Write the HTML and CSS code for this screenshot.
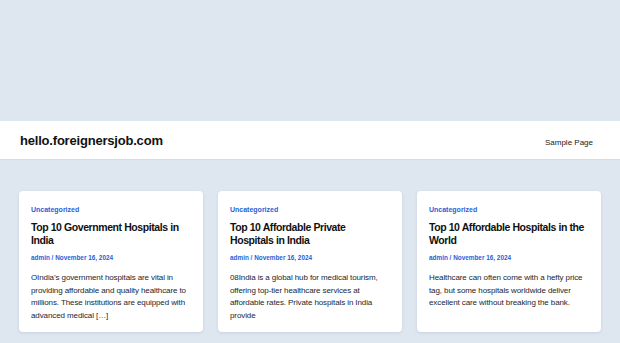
FILE: index.html
```html
<!DOCTYPE html>
<html>
<head>
<meta charset="utf-8">
<link rel="stylesheet" href="styles.css">
</head>
<body>
<div class="top-space"></div>
<header class="site-header">
  <a class="site-title" href="#">hello.foreignersjob.com</a>
  <nav class="site-nav"><a href="#">Sample Page</a></nav>
</header>
<main class="posts">
  <article class="card">
    <a class="cat" href="#">Uncategorized</a>
    <h2 class="title">Top 10 Government Hospitals in India</h2>
    <div class="meta">admin / November 16, 2024</div>
    <p class="excerpt">OIndia’s government hospitals are vital in providing affordable and quality healthcare to millions. These institutions are equipped with advanced medical […]</p>
  </article>
  <article class="card">
    <a class="cat" href="#">Uncategorized</a>
    <h2 class="title">Top 10 Affordable Private Hospitals in India</h2>
    <div class="meta">admin / November 16, 2024</div>
    <p class="excerpt">08India is a global hub for medical tourism, offering top-tier healthcare services at affordable rates. Private hospitals in India provide</p>
  </article>
  <article class="card">
    <a class="cat" href="#">Uncategorized</a>
    <h2 class="title">Top 10 Affordable Hospitals in the World</h2>
    <div class="meta">admin / November 16, 2024</div>
    <p class="excerpt">Healthcare can often come with a hefty price tag, but some hospitals worldwide deliver excellent care without breaking the bank.</p>
  </article>
</main>
</body>
</html>
```

FILE: styles.css
```css
html, body {
  margin: 0;
  padding: 0;
}
body {
  background: #dee6f0;
  font-family: "Liberation Sans", Arial, sans-serif;
  color: #1a1f2b;
  height: 343px;
  overflow: hidden;
}
.top-space {
  height: 121px;
}
.site-header {
  background: #ffffff;
  height: 39px;
  display: flex;
  align-items: center;
  justify-content: space-between;
  padding: 0 27px 0 20px;
  border-bottom: 1px solid #d4dce8;
  box-sizing: border-box;
}
.site-title {
  font-size: 13px;
  font-weight: bold;
  color: #111;
  text-decoration: none;
  letter-spacing: -0.2px;
}
.site-nav a {
  font-size: 8px;
  color: #222;
  text-decoration: none;
}
.posts {
  display: grid;
  grid-template-columns: repeat(3, 184px);
  gap: 15px;
  padding: 31px 20px 0 19px;
}
.card {
  background: #fff;
  border-radius: 4px;
  box-shadow: 0 1px 3px rgba(40, 60, 100, 0.12);
  padding: 14px 12px 12px;
  height: 141px;
  box-sizing: border-box;
}
.cat {
  display: block;
  font-size: 7px;
  font-weight: bold;
  color: #1f5fd8;
  text-decoration: none;
  line-height: 9px;
}
.title {
  margin: 7px 0 0;
  font-size: 10.5px;
  line-height: 13px;
  font-weight: bold;
  color: #111;
  letter-spacing: -0.42px;
}
.meta {
  margin-top: 6px;
  font-size: 6.4px;
  font-weight: bold;
  color: #1f5fd8;
  line-height: 9px;
}
.excerpt {
  margin: 10px 0 0;
  font-size: 8px;
  line-height: 12.5px;
  color: #22262f;
  letter-spacing: -0.1px;
}
```
